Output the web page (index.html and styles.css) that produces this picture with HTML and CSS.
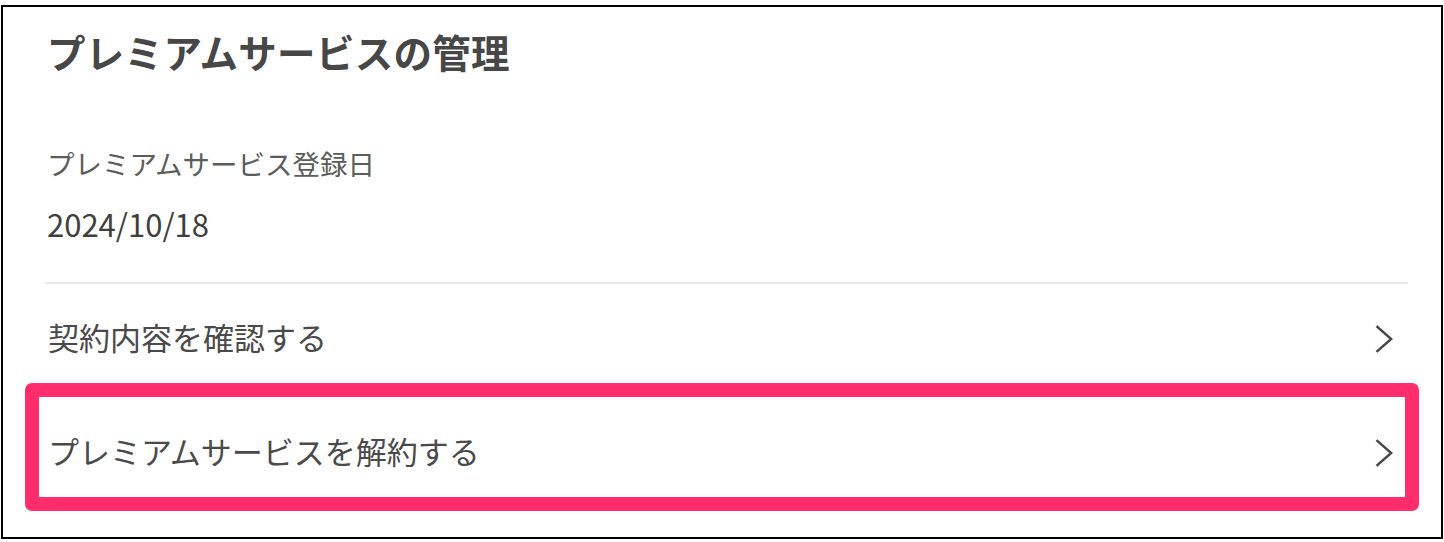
FILE: index.html
```html
<!DOCTYPE html>
<html lang="ja">
<head>
<meta charset="utf-8">
<title>プレミアムサービスの管理</title>
<link rel="stylesheet" href="styles.css">
</head>
<body>
<section class="card">
  <h1 class="title">プレミアムサービスの管理</h1>
  <div class="info">
    <p class="info-label">プレミアムサービス登録日</p>
    <p class="info-value">2024/10/18</p>
  </div>
  <hr class="divider">
  <a class="row row-first" href="#">
    <span class="row-text">契約内容を確認する</span>
    <svg class="chevron" width="18" height="28" viewBox="0 0 18 28"><path d="M1.5 1.2 L16.2 14 L1.5 26.8" fill="none" stroke="#444" stroke-width="2.4"/></svg>
  </a>
  <div class="highlight">
    <a class="row row-second" href="#">
      <span class="row-text">プレミアムサービスを解約する</span>
      <svg class="chevron" width="18" height="28" viewBox="0 0 18 28"><path d="M1.5 1.2 L16.2 14 L1.5 26.8" fill="none" stroke="#444" stroke-width="2.4"/></svg>
    </a>
  </div>
</section>
</body>
</html>
```

FILE: styles.css
```css
* { box-sizing: border-box; }
html, body { margin: 0; padding: 0; background: #fff; }
body {
  font-family: "Noto Sans CJK JP", "Noto Sans", sans-serif;
  color: #444;
}
.card {
  margin: 5px 1px 0 1px;
  height: 534px;
  border: 2px solid #000;
  padding: 0 33px 0 42px;
  background: #fff;
}
.title {
  margin: 19px 0 0 0;
  padding-left: 2px;
  font-size: 38.5px;
  letter-spacing: 0.3px;
  line-height: 50px;
  font-weight: 700;
  color: #474747;
}
.info { margin-top: 67px; padding-left: 2px; }
.info-label {
  margin: 0;
  font-size: 27.5px;
  line-height: 40px;
  color: #5c5c5c;
}
.info-value {
  margin: 21px 0 0 0;
  font-size: 31px;
  line-height: 40px;
  color: #3f3f3f;
}
.divider {
  margin: 38px 0 0 0;
  border: 0;
  height: 2px;
  background: #e8e8e8;
}
.row {
  display: flex;
  align-items: center;
  justify-content: space-between;
  text-decoration: none;
  color: #4a4a4a;
}
.row-text {
  font-size: 31px;
  line-height: 40px;
}
.chevron { margin-top: 4px; flex: none; }
.row-first {
  padding: 33px 15px 26px 3px;
}
.highlight {
  margin: 0 -11px 0 -20px;
  border: 14px solid #ff2d6b;
  border-radius: 7px;
}
.row-second {
  padding: 34px 12px 26px 9px;
}
```
